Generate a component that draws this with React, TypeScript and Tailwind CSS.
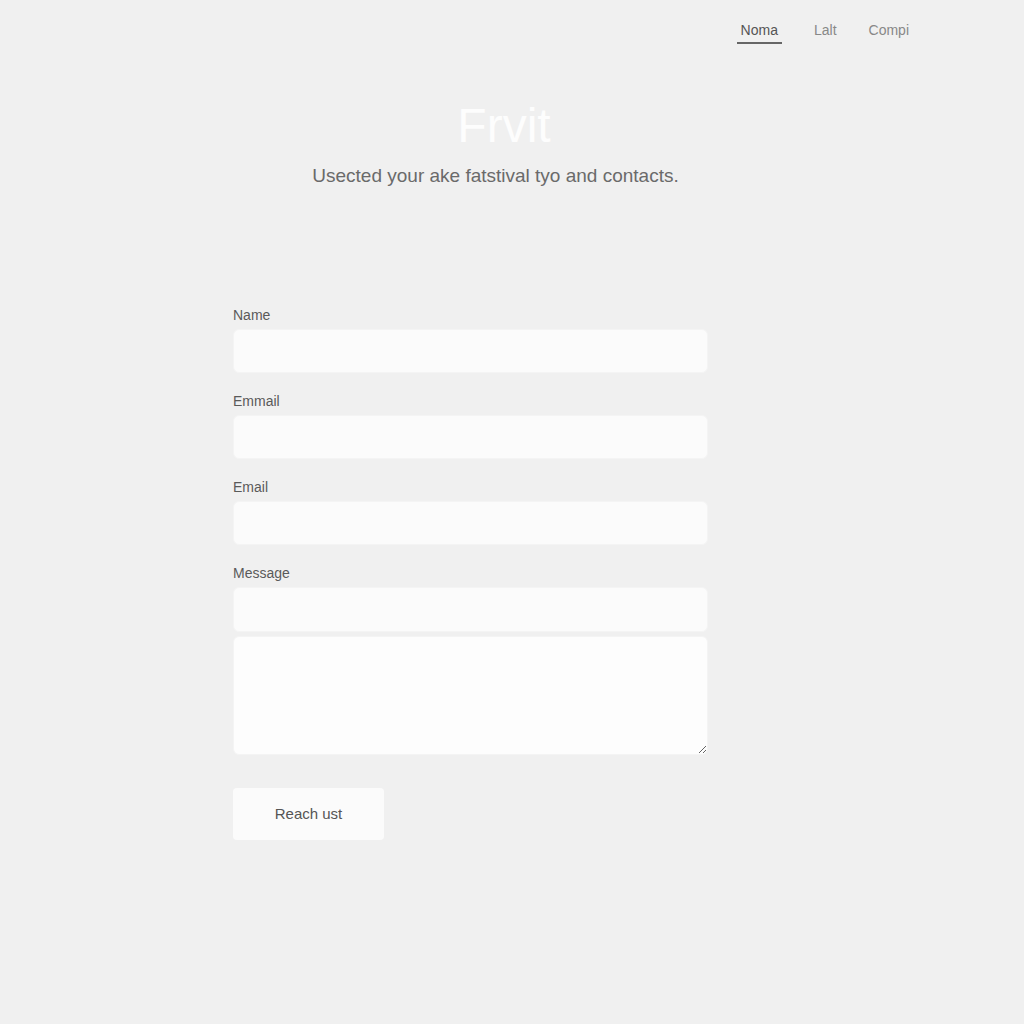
export default function App() {
  const fields = [
    { label: "Name", type: "text" },
    { label: "Emmail", type: "email" },
    { label: "Email", type: "email" },
  ]

  return (
    <div
      className="min-h-screen bg-[#f0f0f0] text-[#555]"
      style={{ fontFamily: '"Liberation Sans", Arial, sans-serif' }}
    >
      {/* Top nav */}
      <header className="flex justify-end pr-[115px] pt-[20px]">
        <nav className="flex items-center gap-[32px] text-[14px] leading-5">
          <a className="border-b-2 border-[#666] px-[4px] pb-[2px] text-[#555]">
            Noma
          </a>
          <a className="pb-[4px] text-[#888]">Lalt</a>
          <a className="pb-[4px] text-[#888]">Compi</a>
        </nav>
      </header>

      {/* Hero */}
      <section className="mt-[54px] flex flex-col items-center">
        <h1 className="pr-[16px] text-[48px] leading-[56px] text-[#fdfdfd]">
          Frvit
        </h1>
        <p className="mt-[10px] pr-[33px] text-[19px] leading-6 text-[#6a6a6a]">
          Usected your ake fatstival tyo and contacts.
        </p>
      </section>

      {/* Contact form */}
      <form className="ml-[233px] mt-[117px] flex w-[475px] flex-col">
        {fields.map((f) => (
          <label key={f.label} className="mb-[18px] flex flex-col gap-[4px]">
            <span className="text-[14px] leading-5 text-[#5a5a5a]">{f.label}</span>
            <input
              type={f.type}
              className="h-[44px] rounded-[6px] border border-[#f4f4f4] bg-[#fbfbfb] px-3 outline-none"
            />
          </label>
        ))}

        <label className="flex flex-col gap-[4px]">
          <span className="text-[14px] leading-5 text-[#5a5a5a]">Message</span>
          <input
            type="text"
            className="h-[45px] rounded-[6px] border border-[#f4f4f4] bg-[#fbfbfb] px-3 outline-none"
          />
          <textarea className="h-[119px] rounded-[6px] border border-[#f4f4f4] bg-[#fdfdfd] px-3 py-2 outline-none" />
        </label>

        <button
          type="button"
          className="mt-[33px] h-[52px] w-[151px] rounded-[4px] bg-[#fbfbfb] text-[15px] text-[#555]"
        >
          Reach ust
        </button>
      </form>
    </div>
  )
}
